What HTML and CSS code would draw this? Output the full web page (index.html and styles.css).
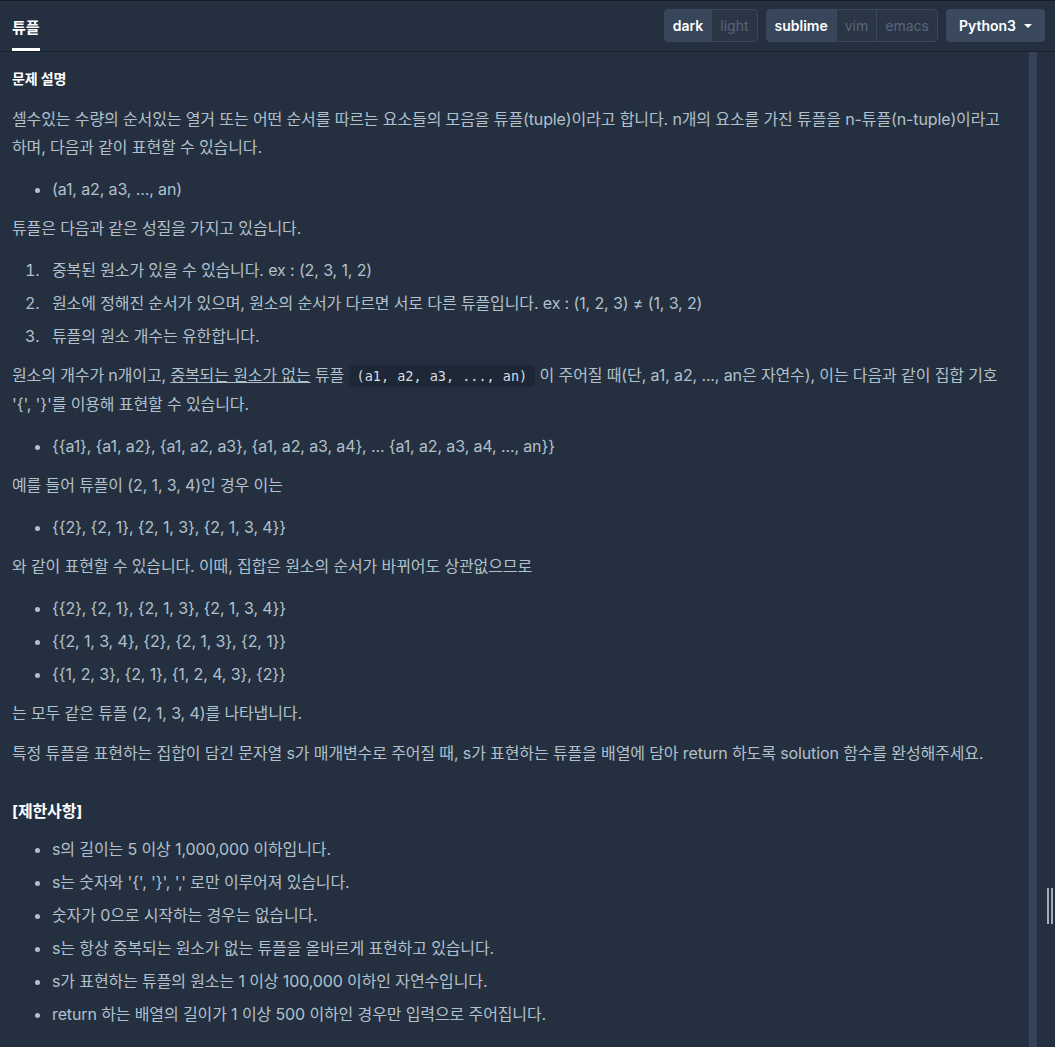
FILE: index.html
```html
<!DOCTYPE html>
<html lang="ko">
	<head>
		<meta charset="UTF-8">
		<title>튜플</title>
		<link rel="stylesheet" href="styles.css">
	</head>
	<body>
		<div class="topbar">
			<div class="tab">튜플</div>
			<div class="controls">
				<div class="btnGroup">
					<span class="seg active">dark</span>
					<span class="seg">light</span>
				</div>
				<div class="btnGroup">
					<span class="seg active">sublime</span>
					<span class="seg">vim</span>
					<span class="seg">emacs</span>
				</div>
				<div class="langBtn">Python3 <span class="caret"></span></div>
			</div>
		</div>

		<div class="main">
			<div class="desc">
				<h6 class="sectionTitle">문제 설명</h6>

				<p>셀수있는 수량의 순서있는 열거 또는 어떤 순서를 따르는 요소들의 모음을 튜플(tuple)이라고 합니다. n개의 요소를 가진 튜플을 n-튜플(n-tuple)이라고 하며, 다음과 같이 표현할 수 있습니다.</p>
				<ul>
					<li>(a1, a2, a3, ..., an)</li>
				</ul>

				<p>튜플은 다음과 같은 성질을 가지고 있습니다.</p>
				<ol>
					<li>중복된 원소가 있을 수 있습니다. ex : (2, 3, 1, 2)</li>
					<li>원소에 정해진 순서가 있으며, 원소의 순서가 다르면 서로 다른 튜플입니다. ex : (1, 2, 3) ≠ (1, 3, 2)</li>
					<li>튜플의 원소 개수는 유한합니다.</li>
				</ol>

				<p>원소의 개수가 n개이고, <u>중복되는 원소가 없는</u> 튜플 <code>(a1, a2, a3, ..., an)</code> 이 주어질 때(단, a1, a2, ..., an은 자연수), 이는 다음과 같이 집합 기호 '{', '}'를 이용해 표현할 수 있습니다.</p>
				<ul>
					<li>{{a1}, {a1, a2}, {a1, a2, a3}, {a1, a2, a3, a4}, ... {a1, a2, a3, a4, ..., an}}</li>
				</ul>

				<p>예를 들어 튜플이 (2, 1, 3, 4)인 경우 이는</p>
				<ul>
					<li>{{2}, {2, 1}, {2, 1, 3}, {2, 1, 3, 4}}</li>
				</ul>

				<p>와 같이 표현할 수 있습니다. 이때, 집합은 원소의 순서가 바뀌어도 상관없으므로</p>
				<ul>
					<li>{{2}, {2, 1}, {2, 1, 3}, {2, 1, 3, 4}}</li>
					<li>{{2, 1, 3, 4}, {2}, {2, 1, 3}, {2, 1}}</li>
					<li>{{1, 2, 3}, {2, 1}, {1, 2, 4, 3}, {2}}</li>
				</ul>

				<p>는 모두 같은 튜플 (2, 1, 3, 4)를 나타냅니다.</p>

				<p>특정 튜플을 표현하는 집합이 담긴 문자열 s가 매개변수로 주어질 때, s가 표현하는 튜플을 배열에 담아 return 하도록 solution 함수를 완성해주세요.</p>

				<h5 class="subTitle">[제한사항]</h5>
				<ul>
					<li>s의 길이는 5 이상 1,000,000 이하입니다.</li>
					<li>s는 숫자와 '{', '}', ',' 로만 이루어져 있습니다.</li>
					<li>숫자가 0으로 시작하는 경우는 없습니다.</li>
					<li>s는 항상 중복되는 원소가 없는 튜플을 올바르게 표현하고 있습니다.</li>
					<li>s가 표현하는 튜플의 원소는 1 이상 100,000 이하인 자연수입니다.</li>
					<li>return 하는 배열의 길이가 1 이상 500 이하인 경우만 입력으로 주어집니다.</li>
				</ul>
			</div>
			<div class="scrollTrack"></div>
			<div class="gutter">
				<div class="grip"></div>
			</div>
		</div>
	</body>
</html>
```

FILE: styles.css
```css
html, body {
	height: 100%;
}

body {
	margin: 0;
	overflow: hidden;
	background-color: #243040;
	color: #b2c0cc;
	font-family: 'Inter', 'Noto Sans CJK KR', sans-serif;
	font-size: 16px;
	border-top: 1px solid #141b24;
	box-sizing: border-box;
	display: flex;
	flex-direction: column;
}

.topbar {
	height: 50px;
	flex-shrink: 0;
	display: flex;
	justify-content: space-between;
	border-bottom: 1px solid #172029;
}

.tab {
	margin-left: 12px;
	padding-top: 15px;
	height: 32px;
	border-bottom: 3px solid #ffffff;
	color: #ffffff;
	font-size: 15px;
	font-weight: bold;
}

.controls {
	display: flex;
	align-items: flex-start;
	gap: 8px;
	padding-top: 8px;
	padding-right: 10px;
}

.btnGroup {
	display: flex;
	height: 31px;
	border: 1px solid #3a485b;
	border-radius: 4px;
	overflow: hidden;
	background-color: #2a3646;
}

.seg {
	display: flex;
	align-items: center;
	padding: 0 8px;
	font-size: 14px;
	color: #56657a;
	border-left: 1px solid #3a485b;
}

.seg:first-child {
	border-left: none;
}

.seg.active {
	background-color: #37465a;
	color: #ffffff;
	font-weight: 600;
}

.langBtn {
	display: flex;
	align-items: center;
	gap: 8px;
	height: 33px;
	padding: 0 13px;
	border-radius: 4px;
	background-color: #3a495d;
	color: #ffffff;
	font-size: 14px;
	font-weight: 600;
}

.caret {
	width: 0;
	height: 0;
	border-left: 4px solid transparent;
	border-right: 4px solid transparent;
	border-top: 4px solid #ffffff;
}

.main {
	flex: 1;
	display: flex;
	min-height: 0;
}

.desc {
	flex: 1;
	padding: 0 12px;
	overflow: hidden;
	word-break: keep-all;
	letter-spacing: -0.12px;
}

.sectionTitle {
	margin: 18px 0 17px;
	color: #ffffff;
	font-size: 14px;
	font-weight: bold;
	line-height: 18px;
}

p {
	margin: 0 0 12px;
	line-height: 28px;
}

ul, ol {
	margin: 0 0 11px;
	padding: 2px 0 0 40px;
}

li {
	line-height: 28px;
	margin-bottom: 5px;
}

ol li::marker {
	content: counter(list-item) ".   ";
}

u {
	text-decoration-color: #b2c0cc;
}

code {
	font-family: 'DejaVu Sans Mono', monospace;
	font-size: 13.5px;
	letter-spacing: 0;
	color: #d5dde4;
	background-color: #1d2735;
	border-radius: 4px;
	padding: 3px 8px;
}

.subTitle {
	margin: 30px 0 8px;
	color: #ffffff;
	font-size: 16px;
	font-weight: bold;
	line-height: 28px;
}

.scrollTrack {
	width: 8px;
	flex-shrink: 0;
	background-color: #344359;
}

.gutter {
	width: 18px;
	flex-shrink: 0;
	display: flex;
	justify-content: flex-end;
	padding-right: 2px;
	box-sizing: border-box;
}

.grip {
	width: 2px;
	height: 36px;
	margin-top: 836px;
	border-left: 2px solid #a2adb9;
	border-right: 2px solid #a2adb9;
}
```
